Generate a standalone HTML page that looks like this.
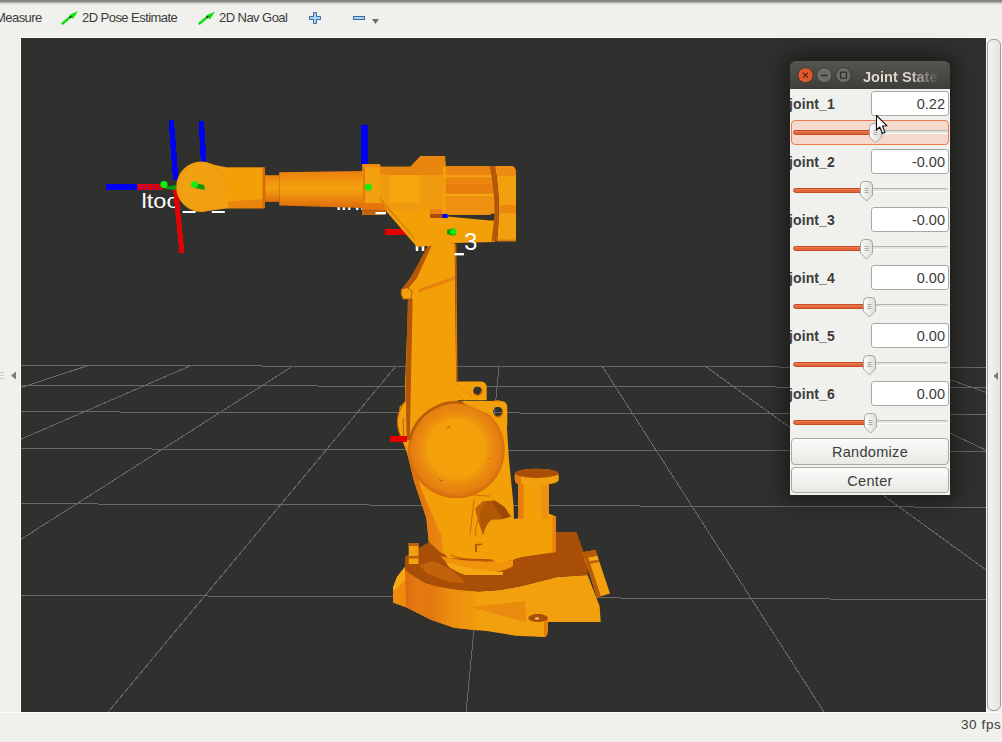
<!DOCTYPE html>
<html><head><meta charset="utf-8">
<style>
*{margin:0;padding:0;box-sizing:border-box}
html,body{width:1002px;height:742px;overflow:hidden;background:#f0f0ec;font-family:"Liberation Sans",sans-serif;position:relative}
.abs{position:absolute}
#topshadow{left:0;top:0;width:1002px;height:7px;background:linear-gradient(#83837f 0px,#878783 1.5px,#b4b4b0 2.5px,#d8d8d4 3.5px,#e8e8e4 4.5px,#f0f0ec 6.5px)}
.tb{position:absolute;top:10px;font-size:13px;color:#3c3c3c;white-space:nowrap;letter-spacing:-0.55px}
#vp{left:21px;top:38px;width:965px;height:674px;background:#30302e;overflow:hidden}
#vpline{left:20px;top:37px;width:967px;height:676px;background:#fbfbf9}
#status{left:0;top:712px;width:1002px;height:30px;background:#f0f0ec}
#fps{left:961px;top:717px;font-size:13.5px;color:#3c3c3c;letter-spacing:0.6px;white-space:nowrap}
#rhandle{left:987px;top:39px;width:14px;height:672px;border:1px solid #9c9c98;border-radius:6px;background:linear-gradient(90deg,#f4f4f2,#e4e4e0)}
#panel{left:790px;top:61px;width:160px;height:434px;box-shadow:0 0 22px 6px rgba(0,0,0,0.45);border-radius:6px 6px 0 0}
#ptitle{left:0;top:0;width:160px;height:28px;background:linear-gradient(#57554f,#3e3d39);border-radius:6px 6px 0 0;overflow:hidden}
#pbody{left:0;top:28px;width:160px;height:406px;background:#f0f0ec;overflow:hidden}
.lbl{position:absolute;left:-1px;font-weight:bold;font-size:14px;color:#3c3c3c;letter-spacing:0.1px}
.box{position:absolute;left:81px;width:78px;height:25px;background:#fff;border:1px solid #a8a8a4;border-radius:3px;font-size:14.5px;color:#3c3c3c;text-align:right;padding-right:3px;line-height:25px}
.groove{position:absolute;left:3px;width:155px;height:4px;border-radius:2px;background:#e3e3df;border-top:1px solid #b4b4b0;border-bottom:1px solid #ffffff}
.fill{position:absolute;left:3px;height:5px;border-radius:3px;background:linear-gradient(#ee8462 0,#e46a40 40%,#e06238 100%);border:1px solid #c84c22}
.btn{position:absolute;left:1px;width:158px;height:26px;border:1px solid #a8a8a4;border-radius:4px;background:linear-gradient(#fbfbfa,#e8e8e4);font-size:14.5px;color:#3c3c3c;text-align:center;line-height:26px;letter-spacing:0.3px}
</style></head><body>

<div id="topshadow" class="abs"></div>
<div class="tb" style="left:-5px">Measure</div>
<svg class="abs" style="left:60px;top:9px" width="20" height="16" viewBox="60 9 20 16"><path d="M62.5,23.5 L71,16.5" stroke="#10e010" stroke-width="2.4" stroke-linecap="round"/><path d="M78,11 L69,15 L73,19 Z" fill="#10e010"/><circle cx="70.5" cy="17" r="1.1" fill="#202020"/></svg>
<div class="tb" style="left:82px">2D Pose Estimate</div>
<svg class="abs" style="left:197px;top:9px" width="20" height="16" viewBox="197 9 20 16"><path d="M199.5,23.5 L208,16.5" stroke="#10e010" stroke-width="2.4" stroke-linecap="round"/><path d="M215,11.5 L206,15.5 L210,19.5 Z" fill="#10e010"/><circle cx="207.5" cy="17" r="1.1" fill="#202020"/></svg>
<div class="tb" style="left:219px">2D Nav Goal</div>
<svg class="abs" style="left:308px;top:11px" width="14" height="14" viewBox="308 11 14 14"><path d="M313.5,12.5 H316.5 V16.5 H320.5 V19.5 H316.5 V23.5 H313.5 V19.5 H309.5 V16.5 H313.5 Z" fill="#a6d6f2" stroke="#3e68a8" stroke-width="1"/></svg>
<svg class="abs" style="left:352px;top:15px" width="14" height="6" viewBox="352 15 14 6"><rect x="353.5" y="16.5" width="11" height="3" fill="#a6d6f2" stroke="#3e68a8" stroke-width="1"/></svg>
<svg class="abs" style="left:371px;top:18px" width="9" height="7" viewBox="371 18 9 7"><path d="M372,19 L379,19 L375.5,24 Z" fill="#6e6e6a"/></svg>
<div id="vpline" class="abs"></div>
<div id="vp" class="abs">
<svg width="965" height="674" viewBox="21 38 965 674" style="position:absolute;left:0;top:0">
<g stroke="#686866" stroke-width="1" shape-rendering="crispEdges"><line x1="-14.51" y1="365.47" x2="-1525.22" y2="765.11"/><line x1="87.66" y1="365.67" x2="-1136.17" y2="767.88"/><line x1="190.10" y1="365.87" x2="-743.22" y2="770.67"/><line x1="292.81" y1="366.07" x2="-346.29" y2="773.49"/><line x1="395.78" y1="366.26" x2="54.66" y2="776.35"/><line x1="499.01" y1="366.46" x2="459.70" y2="779.23"/><line x1="602.52" y1="366.67" x2="868.90" y2="782.13"/><line x1="706.29" y1="366.87" x2="1282.31" y2="785.07"/><line x1="810.33" y1="367.07" x2="1700.01" y2="788.04"/><line x1="914.65" y1="367.27" x2="2122.05" y2="791.04"/><line x1="1019.23" y1="367.47" x2="2548.52" y2="794.08"/><line x1="-866.37" y1="590.82" x2="1867.21" y2="604.02"/><line x1="-529.48" y1="501.70" x2="1527.53" y2="509.27"/><line x1="-324.90" y1="447.58" x2="1324.04" y2="452.50"/><line x1="-187.48" y1="411.23" x2="1188.50" y2="414.69"/><line x1="-88.80" y1="385.12" x2="1091.76" y2="387.70"/><line x1="-14.51" y1="365.47" x2="1019.23" y2="367.47"/></g>
<defs>
<radialGradient id="gSph" cx="0.5" cy="0.49" r="0.5"><stop offset="0" stop-color="#f3a008"/><stop offset="0.6" stop-color="#f3a00a"/><stop offset="0.67" stop-color="#ee940e"/><stop offset="0.76" stop-color="#ea8a10"/><stop offset="0.9" stop-color="#e68010"/><stop offset="0.97" stop-color="#de7410"/><stop offset="1" stop-color="#d46a0c"/></radialGradient>
<radialGradient id="gDisc" cx="0.5" cy="0.5" r="0.55"><stop offset="0" stop-color="#f2a010"/><stop offset="0.8" stop-color="#f0a012"/><stop offset="1" stop-color="#ec9410"/></radialGradient>
<linearGradient id="gTube" x1="0" y1="0" x2="0" y2="1"><stop offset="0" stop-color="#ea7e0c"/><stop offset="0.3" stop-color="#f29810"/><stop offset="0.5" stop-color="#f4a00c"/><stop offset="0.75" stop-color="#eb860e"/><stop offset="1" stop-color="#dc6c0a"/></linearGradient>
<linearGradient id="gBaseSide" x1="0" y1="0" x2="1" y2="0"><stop offset="0" stop-color="#dc6c0e"/><stop offset="0.2" stop-color="#e67c10"/><stop offset="0.35" stop-color="#e27610"/><stop offset="0.6" stop-color="#ec8c10"/><stop offset="1" stop-color="#f29c0c"/></linearGradient>
<linearGradient id="gSide" x1="0" y1="0" x2="1" y2="0"><stop offset="0" stop-color="#dc6c0c"/><stop offset="0.5" stop-color="#e47a0e"/><stop offset="1" stop-color="#ec8810"/></linearGradient>
</defs>
<!-- labels (behind robot) -->
<g fill="#ffffff" font-family="Liberation Sans" font-size="21px">
<text x="141.5" y="207.5" textLength="38" lengthAdjust="spacingAndGlyphs">ltoo</text>
<text x="336" y="209.5" textLength="62" lengthAdjust="spacingAndGlyphs">link_4</text>
<text x="414" y="250.5" textLength="40" lengthAdjust="spacingAndGlyphs">link</text>
</g>
<!-- axes -->
<g shape-rendering="crispEdges">
<path d="M168.5,120 L174,120 L178.5,180 L173,180 Z" fill="#0000f4"/>
<path d="M198.5,121 L204,121 L206.5,163 L201,163 Z" fill="#0000f4"/>
<rect x="106" y="184" width="32" height="6" fill="#0000f4"/>
<rect x="137" y="184" width="26" height="6" fill="#e80000"/>
<path d="M137,185 h26 M137,187 h26 M137,189 h26" stroke="#2020ff" stroke-width="0.7" stroke-dasharray="1.2 1.8"/>
<path d="M173,189 L178,189 L184.5,253 L179.5,253 Z" fill="#e40000"/>
<rect x="361" y="125" width="6.5" height="40" fill="#0000f4"/>
<rect x="385" y="229" width="23" height="6" fill="#e40000"/>
<rect x="390" y="436" width="17" height="6" fill="#e40000"/>
</g>
<!-- green tip on wrist axis -->
<path d="M164,187 L176,185 L177,190 L166,189 Z" fill="#0a9a0a"/>
<ellipse cx="164" cy="184.5" rx="3.6" ry="3.4" fill="#10f010"/>

<!-- ===== BASE ===== -->
<!-- base front body light -->
<path d="M393,602.5 L405.7,607 L430.9,619.7 L453.9,627.7 L488.3,631.2 L515.8,635.7 L545.7,636.9 L548,628.9 L548,622 L600.7,622 L599.6,605.9 L587.6,574.9 L556.9,577 L521.7,585.9 L500,590 L478,591.6 L459,590 L440,587 L425,583 L415,577 L405,570 L405,566.8 L397,577 L393,587.5 Z" fill="#f2a00e"/>
<path d="M405,570 L415,577 L425,583 L440,587 L459,590 L478,591.6 L478,630.5 L453.9,627.7 L430.9,619.7 L405.7,607 Z" fill="url(#gBaseSide)"/>
<path d="M393,587.5 L397,577 L405,566.8 L405,580 L395,590 Z" fill="#f5a812"/>
<path d="M393,590 L395,590 L405,580 L405,607 L393,602.5 Z" fill="#ee8a0e"/>
<!-- darker triangle patch -->
<path d="M470,607 L525,601.3 L526.2,622 Z" fill="#ea8a0e"/>
<!-- brown top -->
<path d="M405,570 L405,556.7 L418.5,548 L429.5,542 L470,540 L520,536 L556.9,532 L576.6,532 L583.2,550.7 L587.6,564 L587.6,574.9 L556.9,577 L521.7,585.9 L500,590 L478,591.6 L459,590 L440,587 L425,583 L415,577 Z" fill="#a84e06"/>
<path d="M419,565 L434,561 L452,570 L466,583 L448,582 L428,574 Z" fill="#c2620a"/>
<!-- small right block -->
<path d="M582.5,552.3 L595.4,550 L610,593.6 L597,597.6 Z" fill="#f2a00e"/>
<path d="M582.5,552.3 L595.4,550 L597.5,556 L584.5,558.5 Z" fill="#b85a08"/>
<path d="M584.5,558.5 L597.5,556 L598.5,559.5 L585.5,562 Z" fill="#f5a812"/>
<path d="M585.5,562 L598.5,559.5 L599.3,562 L586.3,564.5 Z" fill="#c0600a"/>
<path d="M583,553 L586.5,552.5 L601,596.5 L597,597.6 Z" fill="#b85a08"/>
<!-- pin at bottom -->
<path d="M528.3,617 Q528.3,613.8 538,613.8 Q547.7,613.8 547.7,617 L547.7,632 Q547.7,636.5 540,636.5 L528.3,635 Z" fill="#f2a00e"/>
<path d="M544,617 L547.7,617 L547.7,632 Q547.7,636.5 544,636.5 Z" fill="#e47c0c"/>
<ellipse cx="538" cy="618" rx="9.7" ry="4" fill="#a84e06"/>
<ellipse cx="537" cy="618.5" rx="2.2" ry="1.3" fill="#f5c070"/>
<!-- small left block on base -->
<rect x="408.7" y="543" width="9.8" height="21" fill="#f2a00e"/>
<rect x="408.7" y="543" width="9.8" height="3" fill="#c0600a"/>
<rect x="408.7" y="556" width="9.8" height="2.5" fill="#b85a08"/>

<!-- ===== LOWER ARM ===== -->
<!-- lugs -->
<path fill-rule="evenodd" d="M456,381.4 L481,381.4 Q486.7,382 486.7,387.1 L486.7,400.3 L456,400.3 Z M482,390.8 A4.4,4.4 0 1 0 473.2,390.8 A4.4,4.4 0 1 0 482,390.8 Z" fill="#f3a008"/>
<path d="M481.4,390.2 A3.9,3.9 0 0 1 474.8,393.8" fill="none" stroke="#b85c08" stroke-width="1.3"/>
<path d="M457,385 L472,396" stroke="#b85c08" stroke-width="0.7" stroke-dasharray="1 1.5"/>
<path d="M457,394.5 L468,402" stroke="#b85c08" stroke-width="0.7" stroke-dasharray="1 1.5"/>
<!-- main body -->
<path d="M431.5,245 L454.7,243 L456.2,381 L456,398 L466,410 L506,413 L509,460 L513.5,505 L514,518 L513.8,560 L448,558 L441.6,551 L428.7,541.5 L426.4,518.2 L414.2,481.8 L407,452.7 L400.9,435.8 L397.3,423.6 L399.7,406.7 L405,401.8 L405,385 L408.4,298.8 L401,293 L401.9,288.9 L410.5,278 Z" fill="#f3a008"/>
<path d="M455.7,244 L456.9,381" stroke="#ec6e04" stroke-width="1.2"/>
<!-- dark left edge strip -->
<path d="M431.5,245.8 L427.7,245.8 L410.5,278 L401.9,288.9 L407.8,288.9 L417,278 Z" fill="#b25808"/>
<path d="M401.5,289 L407,287.5 L412,291 L411,299 L403,299 L401,294 Z" fill="#f2a00e" stroke="#b25808" stroke-width="1"/>
<path d="M407.8,299 L412.6,299 L409.8,440 L406.8,440 L405,412 Z" fill="#b25808"/>
<path d="M418,289.5 L455,276.3 L455,279.5 L418,293 Z" fill="#e8820e"/>
<!-- left bump side -->
<path d="M405,401.5 Q398,410 397.3,421 Q397.5,430 400.5,436 L404,442 L406.5,441 L406,402 Z" fill="#f2a00e"/>
<path d="M405,401.5 Q398,410 397.3,421 Q397.5,430 400.5,436" fill="none" stroke="#b85c08" stroke-width="1.1"/>
<path d="M403,418 L403.8,437" fill="none" stroke="#c0600a" stroke-width="1"/>
<path d="M407,452.7 L400.5,436 L404,442 L410,452 Z" fill="#ec8c0e"/>
<rect x="390" y="436" width="17" height="6" fill="#e40000" shape-rendering="crispEdges"/>
<!-- lower left side face -->
<path d="M407,452.7 L414.2,481.8 L426.4,518.2 L428.7,541.5 L443,554.7 L442,536.4 L421.5,490 L411,455 Z" fill="url(#gSide)"/>
<!-- dark motor wedge -->
<path d="M475.3,508.5 L483.3,501.2 L494.7,500.4 L504.4,506.9 L510.8,516.6 L494.7,521.4 L485,529.5 L483.3,536 L478.5,521.4 Z" fill="#b05806"/>
<path d="M494.7,500.4 L504.4,506.9 L510.8,516.6 L503,519 L492,502 Z" fill="#9c4a04"/>
<path d="M475.3,508.5 L483.3,501.2 L486,503 L480,512 L481,525 L478.5,521.4 Z" fill="#c0620a"/>
<!-- thin edge lines on arm -->
<path d="M474,500 L470,535" stroke="#c0600a" stroke-width="0.8" fill="none"/>
<path d="M455,490 Q470,496 490,496" stroke="#c0600a" stroke-width="0.8" fill="none"/>
<!-- turntable crescent -->
<path d="M440.5,556 Q470,564 513,560 L513,566 Q500,575 470,571 Q452,566 446,562 Z" fill="#f0940e"/>
<path d="M446,562 Q470,570 503,572 L502.7,575 L465,575 Q452,570 448,566 Z" fill="#f5a812"/>
<path d="M450,555 Q470,562 500,561" stroke="#c0600a" stroke-width="1" fill="none"/>
<!-- sphere -->
<circle cx="456.4" cy="449.8" r="48.3" fill="url(#gSph)"/>
<path d="M409.9,439.9 A47.5,47.5 0 0 1 472.6,405.2" fill="none" stroke="#b85c08" stroke-width="2.6"/>
<path d="M447,429 l2,-3 l1.5,3 M439,479 l2,2 l2,-1 M488,458 l1.5,1" stroke="#b85c08" stroke-width="0.8" fill="none"/>
<path fill-rule="evenodd" d="M462,401 L501.2,401 Q507.3,401.5 507.3,407.3 L507.3,426 L491.8,416.1 L464.8,404 Z M502.5,411.7 A4.6,4.6 0 1 0 493.3,411.7 A4.6,4.6 0 1 0 502.5,411.7 Z" fill="#f3a008"/>
<circle cx="497.9" cy="411.7" r="4.6" fill="#30302e"/>
<path d="M493.3,412.5 H502.5 M494.5,407.3 V416" stroke="#686866" stroke-width="1" shape-rendering="crispEdges"/>
<path d="M502,411 A4.1,4.1 0 0 1 494.8,414.8" fill="none" stroke="#b85c08" stroke-width="1.3"/>
<path d="M464.8,404 L491.8,416.1" stroke="#b85c08" stroke-width="0.8" stroke-dasharray="1 1.2"/>
<rect x="494" y="400" width="6" height="1.5" fill="#d06808"/>

<!-- lower motor housing + counterweight -->
<path d="M491.4,519.8 L514,519 L548,513.3 L556,516.6 L556,552 L522,557 L497.9,563.5 Q484,556 483,538 Q484,526 491.4,519.8 Z" fill="#f3a008"/>
<path d="M552.5,516 L556,516.6 L556,552 L552.5,552.5 Z" fill="#e98010"/>
<path d="M475.5,536 L476,527 L478,519" stroke="#c0600a" stroke-width="0.8" fill="none"/>
<path d="M475,544 L482,543.5 L482,545 L477,545.5 L477,552 L475,552 Z" fill="#b05806"/>
<rect x="518" y="483" width="30.8" height="36" fill="#f3a008"/>
<rect x="518" y="483" width="5.5" height="36" fill="#e67e0e"/>
<rect x="541.5" y="483" width="7.3" height="36" fill="#ee9210"/>
<path d="M514.8,476 Q514.8,468.8 536.5,468.8 Q558.7,468.8 558.7,476 L558.7,479.5 Q558.7,484.8 536.5,484.8 Q514.8,484.8 514.8,479.5 Z" fill="#f2a00e"/>
<path d="M514.8,476 L514.8,479.5 Q514.8,484.8 521,484.8 L521,476 Z" fill="#e27a0c"/>
<ellipse cx="536.7" cy="473.3" rx="21.9" ry="4.6" fill="#a84e06"/>

<!-- ===== HOUSING (link3) ===== -->
<!-- lower housing body -->
<path d="M386,211 L383,203 L447.7,203 L447.7,216.5 L490,220.6 L495,220.6 L495,242 L454.2,243.1 L417,247 Z" fill="#f3a008"/>
<path d="M380,166.8 L410.5,166.8 L420.6,156 L445,156 L445.6,166.2 L490,166.2 L490,215 L447.7,215 L447.7,218 L430,218 L430,209 L386,211 L380,214.7 Z" fill="#f09a10"/>
<path d="M380,166.8 L410.5,166.8 L420.6,156 L445,156 L445.6,166.2 L443,175 L380,175 Z" fill="#e8860e"/>
<rect x="389.6" y="175" width="31" height="28" fill="#f5a50e"/>
<rect x="430" y="209" width="12.3" height="5" fill="#ec800e"/>
<rect x="430" y="214" width="12.3" height="4" fill="#a84e06"/>
<rect x="442.3" y="214" width="5.4" height="4" fill="#0000f4"/>
<path d="M376,194 L414,238" stroke="#b25808" stroke-width="0.8"/>
<!-- motor cylinder with bands -->
<rect x="442.8" y="166.6" width="53.2" height="47.1" fill="#ee9210"/>
<rect x="442.8" y="166.6" width="53.2" height="8.7" fill="#e98510"/>
<rect x="442.8" y="175.3" width="53.2" height="2" fill="#f5a514"/>
<rect x="442.8" y="177.3" width="53.2" height="16.2" fill="#ec860e"/>
<rect x="442.8" y="193.5" width="53.2" height="2.5" fill="#f5a514"/>
<rect x="442.8" y="184" width="53.2" height="9.5" fill="#e87e0e"/>
<rect x="447.7" y="213.5" width="43" height="1.5" fill="#ec8c10"/>
<rect x="442.8" y="166.6" width="3" height="47" fill="#f2a00e"/>
<!-- end cap -->
<path d="M495.2,166.1 L511,166.1 Q516,166.5 516,173 L516,241.2 L497,241.2 Q498.8,225 498.8,205 Q498.8,190 495.2,166.1 Z" fill="#f3a00e"/>
<path d="M495.2,166.1 L511,166.1 Q516,166.5 516,173 L516,176 L497.5,176 Q496.5,170 495.2,166.1 Z" fill="#ec8c10"/>
<rect x="498.8" y="204.8" width="17.2" height="8.5" fill="#e98a0e"/>
<rect x="497" y="239.5" width="19" height="1.7" fill="#e47a0c"/>
<path d="M489.7,166.1 L495.2,166.1 Q498.8,190 498.8,205 Q498.8,225 497,241.2 L491.5,241.2 Q494,225 494.5,211 Q494.5,190 489.7,166.1 Z" fill="#b25808"/>
<!-- flange -->
<rect x="362.4" y="164.2" width="17.8" height="50.5" fill="#f2a00e"/>
<rect x="362.4" y="164.2" width="2.6" height="50.5" fill="#e27a0c"/>
<rect x="362.4" y="203" width="17.8" height="11.6" fill="#e8760e"/>
<path d="M362.4,209.5 L386.5,209.5 L387,212 L380.2,212 L380.2,214.6 L362.4,214.6 Z" fill="#c2620a"/>
<path d="M380.2,203 L383,203 L386.5,209.5 L380.2,209.5 Z" fill="#e8760e"/>
<rect x="375.5" y="212" width="10.5" height="2.2" fill="#ffffff"/>
<rect x="362.4" y="164.2" width="17.8" height="3" fill="#ec8c0e"/>
<ellipse cx="368.3" cy="187.2" rx="3.4" ry="3.6" fill="#10f010"/>
<!-- green blob on link3 -->
<path d="M447,230 L452,228.5 L456,229 L456,235 L452,235.5 L447,234 Z" fill="#0c9c0c"/>
<ellipse cx="453.5" cy="231.8" rx="3.2" ry="3" fill="#10f010"/>

<text x="464.3" y="250" font-family="Liberation Sans" font-size="23.5px" fill="#ffffff">3</text>
<rect x="454.5" y="253" width="9.4" height="2.4" fill="#ffffff"/>
<!-- ===== FOREARM ===== -->
<path d="M279.3,172.2 L363,171 L363,208 L279.3,205.5 Z" fill="url(#gTube)"/>
<rect x="263" y="175.2" width="16.3" height="26.7" fill="url(#gTube)"/>
<rect x="263" y="175.2" width="2.5" height="26.7" fill="#dc7010"/>
<!-- wrist block -->
<rect x="224.7" y="167.3" width="38.5" height="41" fill="#f3a008"/>
<path d="M228,201.5 L263.2,199 L263.2,208.3 L228,208.3 Z" fill="#ea840e"/>
<rect x="262.6" y="167.3" width="2.4" height="41" fill="#d86a08"/>
<path d="M201,162 L226,167.3 L228,208.3 L200,212 Z" fill="#f2a010"/>
<!-- wrist disc -->
<ellipse cx="201.2" cy="186.8" rx="25" ry="25.2" fill="url(#gDisc)"/>
<path d="M194,183 L204,185 L205,190 L195,188 Z" fill="#0a9a0a"/>
<ellipse cx="194.5" cy="184.5" rx="3.6" ry="3.2" fill="#10f010"/>

<rect x="182.6" y="211" width="13" height="2" fill="#ffffff"/>
<rect x="211.8" y="211" width="13" height="2" fill="#ffffff"/>

</svg>
</div>
<svg class="abs" style="left:0;top:368px" width="20" height="14" viewBox="0 368 20 14"><path d="M0,372.5 H4 M0,375.5 H4 M0,378.5 H4" stroke="#cacac6"/><path d="M16,371.5 L11,375.5 L16,379.5 Z" fill="#7a7a76"/></svg>
<div id="rhandle" class="abs"></div>
<svg class="abs" style="left:990px;top:368px" width="12" height="14" viewBox="990 368 12 14"><path d="M998,372 L993.5,376 L998,380 Z" fill="#7a7a76"/></svg>
<div id="panel" class="abs">
 <div id="ptitle" class="abs">
  <svg class="abs" style="left:0;top:0" width="160" height="28" viewBox="790 61 160 28">
   <circle cx="805.5" cy="75.2" r="7.6" fill="#e2582a" stroke="#3a3936" stroke-width="1"/>
   <path d="M803,72.7 L808,77.7 M808,72.7 L803,77.7" stroke="#4a2a1a" stroke-width="1.2"/>
   <circle cx="824.3" cy="75.2" r="7.6" fill="#6e6c68" stroke="#3a3936" stroke-width="1"/>
   <path d="M821,75.5 H827.5" stroke="#2e2d2a" stroke-width="1.3"/>
   <circle cx="843.5" cy="75.2" r="7.6" fill="#6e6c68" stroke="#3a3936" stroke-width="1"/>
   <rect x="840.5" y="72.2" width="6" height="6" fill="none" stroke="#2e2d2a" stroke-width="1.2"/>
  </svg>
  <div class="abs" style="left:73px;top:7.5px;font-size:14.6px;font-weight:bold;white-space:nowrap;background:linear-gradient(90deg,#dedad2 60%,#5a5852 98%);-webkit-background-clip:text;color:transparent">Joint State</div>
 </div>
 <div id="pbody" class="abs"><div class="abs" style="left:1px;top:31px;width:158px;height:25px;background:#f4d9cc;border:1px solid #ec7c50;border-radius:4px"></div><div class="lbl" style="top:7px">joint_1</div><div class="box" style="top:2px">0.22</div><div class="groove" style="top:41px"></div><div class="fill" style="top:41px;width:82px"></div><svg class="abs" style="left:79px;top:34px" width="13" height="21" viewBox="0 0 13 21">
<defs><linearGradient id="hg" x1="0" y1="0" x2="1" y2="0"><stop offset="0" stop-color="#fdfdfc"/><stop offset="1" stop-color="#dcdcd8"/></linearGradient></defs>
<path d="M0.5,4.5 Q0.5,0.5 4.5,0.5 L8.5,0.5 Q12.5,0.5 12.5,4.5 L12.5,14 L6.5,20 L0.5,14 Z" fill="url(#hg)" stroke="#a4a4a0"/>
<path d="M4.5,7.5 H8.5 M4.5,9.5 H8.5 M4.5,11.5 H8.5" stroke="#a8a8a4" stroke-width="1"/></svg><div class="lbl" style="top:65px">joint_2</div><div class="box" style="top:60px">-0.00</div><div class="groove" style="top:99px"></div><div class="fill" style="top:99px;width:73px"></div><svg class="abs" style="left:70px;top:92px" width="13" height="21" viewBox="0 0 13 21">
<defs><linearGradient id="hg" x1="0" y1="0" x2="1" y2="0"><stop offset="0" stop-color="#fdfdfc"/><stop offset="1" stop-color="#dcdcd8"/></linearGradient></defs>
<path d="M0.5,4.5 Q0.5,0.5 4.5,0.5 L8.5,0.5 Q12.5,0.5 12.5,4.5 L12.5,14 L6.5,20 L0.5,14 Z" fill="url(#hg)" stroke="#a4a4a0"/>
<path d="M4.5,7.5 H8.5 M4.5,9.5 H8.5 M4.5,11.5 H8.5" stroke="#a8a8a4" stroke-width="1"/></svg><div class="lbl" style="top:123px">joint_3</div><div class="box" style="top:118px">-0.00</div><div class="groove" style="top:157px"></div><div class="fill" style="top:157px;width:73px"></div><svg class="abs" style="left:70px;top:150px" width="13" height="21" viewBox="0 0 13 21">
<defs><linearGradient id="hg" x1="0" y1="0" x2="1" y2="0"><stop offset="0" stop-color="#fdfdfc"/><stop offset="1" stop-color="#dcdcd8"/></linearGradient></defs>
<path d="M0.5,4.5 Q0.5,0.5 4.5,0.5 L8.5,0.5 Q12.5,0.5 12.5,4.5 L12.5,14 L6.5,20 L0.5,14 Z" fill="url(#hg)" stroke="#a4a4a0"/>
<path d="M4.5,7.5 H8.5 M4.5,9.5 H8.5 M4.5,11.5 H8.5" stroke="#a8a8a4" stroke-width="1"/></svg><div class="lbl" style="top:181px">joint_4</div><div class="box" style="top:176px">0.00</div><div class="groove" style="top:215px"></div><div class="fill" style="top:215px;width:76px"></div><svg class="abs" style="left:73px;top:208px" width="13" height="21" viewBox="0 0 13 21">
<defs><linearGradient id="hg" x1="0" y1="0" x2="1" y2="0"><stop offset="0" stop-color="#fdfdfc"/><stop offset="1" stop-color="#dcdcd8"/></linearGradient></defs>
<path d="M0.5,4.5 Q0.5,0.5 4.5,0.5 L8.5,0.5 Q12.5,0.5 12.5,4.5 L12.5,14 L6.5,20 L0.5,14 Z" fill="url(#hg)" stroke="#a4a4a0"/>
<path d="M4.5,7.5 H8.5 M4.5,9.5 H8.5 M4.5,11.5 H8.5" stroke="#a8a8a4" stroke-width="1"/></svg><div class="lbl" style="top:239px">joint_5</div><div class="box" style="top:234px">0.00</div><div class="groove" style="top:273px"></div><div class="fill" style="top:273px;width:76px"></div><svg class="abs" style="left:73px;top:266px" width="13" height="21" viewBox="0 0 13 21">
<defs><linearGradient id="hg" x1="0" y1="0" x2="1" y2="0"><stop offset="0" stop-color="#fdfdfc"/><stop offset="1" stop-color="#dcdcd8"/></linearGradient></defs>
<path d="M0.5,4.5 Q0.5,0.5 4.5,0.5 L8.5,0.5 Q12.5,0.5 12.5,4.5 L12.5,14 L6.5,20 L0.5,14 Z" fill="url(#hg)" stroke="#a4a4a0"/>
<path d="M4.5,7.5 H8.5 M4.5,9.5 H8.5 M4.5,11.5 H8.5" stroke="#a8a8a4" stroke-width="1"/></svg><div class="lbl" style="top:297px">joint_6</div><div class="box" style="top:292px">0.00</div><div class="groove" style="top:331px"></div><div class="fill" style="top:331px;width:77px"></div><svg class="abs" style="left:74px;top:324px" width="13" height="21" viewBox="0 0 13 21">
<defs><linearGradient id="hg" x1="0" y1="0" x2="1" y2="0"><stop offset="0" stop-color="#fdfdfc"/><stop offset="1" stop-color="#dcdcd8"/></linearGradient></defs>
<path d="M0.5,4.5 Q0.5,0.5 4.5,0.5 L8.5,0.5 Q12.5,0.5 12.5,4.5 L12.5,14 L6.5,20 L0.5,14 Z" fill="url(#hg)" stroke="#a4a4a0"/>
<path d="M4.5,7.5 H8.5 M4.5,9.5 H8.5 M4.5,11.5 H8.5" stroke="#a8a8a4" stroke-width="1"/></svg><div class="btn" style="top:349px;height:27px;line-height:27px">Randomize</div><div class="btn" style="top:378px">Center</div></div>
</div>
<svg class="abs" style="left:870px;top:112px" width="22" height="26" viewBox="870 112 22 26"><path d="M876.5,115.5 L876.5,130 L879.8,127 L882.5,133.5 L885,132.5 L882.5,126 L887,125.8 Z" fill="#fff" stroke="#111" stroke-width="1.1" stroke-linejoin="round"/></svg>
<div id="status" class="abs"><div class="abs" style="left:0;top:0;width:1002px;height:1px;background:#fbfbf9"></div></div>
<div id="fps" class="abs">30 fps</div>
</body></html>
